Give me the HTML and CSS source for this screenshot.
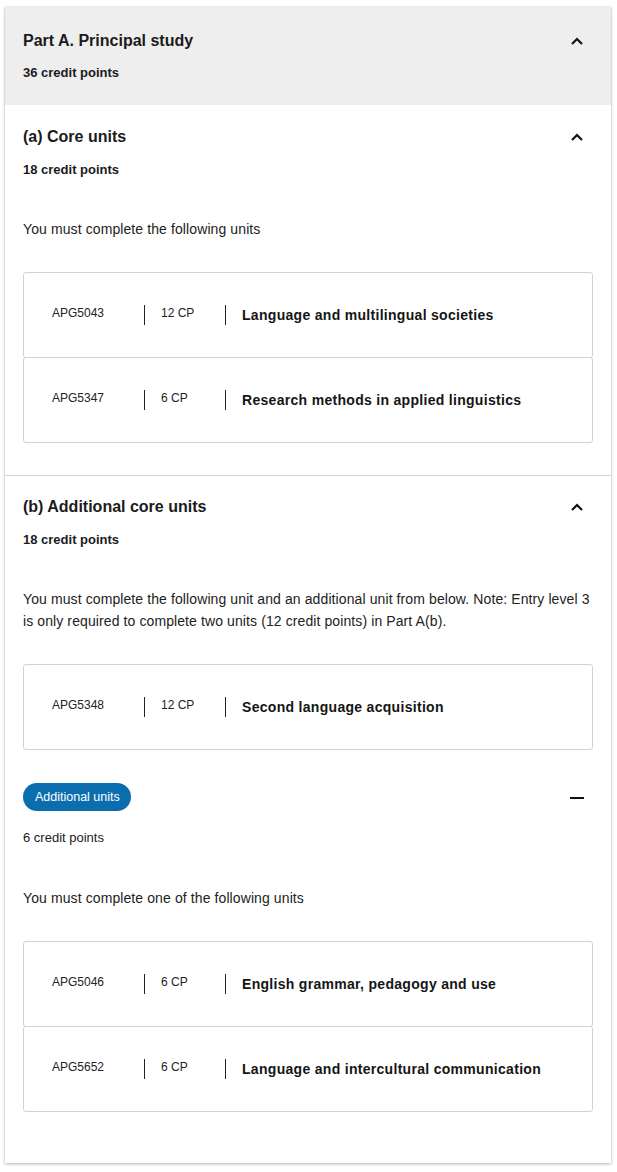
FILE: index.html
```html
<!DOCTYPE html>
<html lang="en">
<head>
<meta charset="utf-8">
<title>Part A. Principal study</title>
<link rel="stylesheet" href="styles.css">
</head>
<body>
<div class="page">
  <div class="card">
    <div class="part-head">
      <div class="head-row">
        <h2 class="part-title">Part A. Principal study</h2>
        <svg class="chev" width="14" height="10" viewBox="0 0 14 10"><path d="M2 8 L7 3 L12 8" fill="none" stroke="#111" stroke-width="2.2"/></svg>
      </div>
      <div class="cp-bold">36 credit points</div>
    </div>

    <section class="sect sect-a">
      <div class="head-row">
        <h3 class="sect-title">(a) Core units</h3>
        <svg class="chev" width="14" height="10" viewBox="0 0 14 10"><path d="M2 8 L7 3 L12 8" fill="none" stroke="#111" stroke-width="2.2"/></svg>
      </div>
      <div class="cp-bold">18 credit points</div>
      <p class="desc">You must complete the following units</p>
      <div class="units">
        <div class="unit"><span class="code">APG5043</span><span class="cp">12 CP</span><span class="name">Language and multilingual societies</span></div>
        <div class="unit"><span class="code">APG5347</span><span class="cp">6 CP</span><span class="name">Research methods in applied linguistics</span></div>
      </div>
    </section>

    <section class="sect sect-b">
      <div class="head-row">
        <h3 class="sect-title">(b) Additional core units</h3>
        <svg class="chev" width="14" height="10" viewBox="0 0 14 10"><path d="M2 8 L7 3 L12 8" fill="none" stroke="#111" stroke-width="2.2"/></svg>
      </div>
      <div class="cp-bold">18 credit points</div>
      <p class="desc">You must complete the following unit and an additional unit from below. Note: Entry level 3 is only required to complete two units (12 credit points) in Part A(b).</p>
      <div class="units">
        <div class="unit"><span class="code">APG5348</span><span class="cp">12 CP</span><span class="name">Second language acquisition</span></div>
      </div>

      <div class="sub">
        <div class="head-row">
          <span class="badge">Additional units</span>
          <span class="minus"></span>
        </div>
        <div class="cp-normal">6 credit points</div>
        <p class="desc desc-sub">You must complete one of the following units</p>
        <div class="units">
          <div class="unit"><span class="code">APG5046</span><span class="cp">6 CP</span><span class="name">English grammar, pedagogy and use</span></div>
          <div class="unit"><span class="code">APG5652</span><span class="cp">6 CP</span><span class="name">Language and intercultural communication</span></div>
        </div>
      </div>
    </section>
  </div>
</div>
</body>
</html>
```

FILE: styles.css
```css
* { box-sizing: border-box; }
body {
  margin: 0;
  background: #fff;
  font-family: "Liberation Sans", Arial, sans-serif;
  color: #1b1b1b;
}
.page {
  padding: 7px 6px 9px 5px;
}
.card {
  background: #fff;
  box-shadow: 0 1px 3px rgba(0,0,0,0.28), 0 0 1px rgba(0,0,0,0.2);
  padding-bottom: 51px;
}
.part-head {
  background: #eeeeee;
  padding: 24px 18px 23px 18px;
}
.head-row {
  display: flex;
  align-items: center;
  justify-content: space-between;
  padding-right: 9px;
}
.part-title, .sect-title {
  margin: 0;
  font-size: 16px;
  line-height: 20px;
  font-weight: bold;
}
.chev { display: block; }
.cp-bold {
  margin-top: 13px;
  font-size: 13px;
  line-height: 18px;
  font-weight: bold;
}
.sect {
  padding: 22px 18px 0 18px;
}
.sect-a {
  padding-top: 22px;
  padding-bottom: 32px;
  border-bottom: 1px solid #d4d4d4;
}
.sect-b { padding-top: 21px; }
.sect .cp-bold { margin-top: 14px; }
.desc {
  margin: 39px 0 0 0;
  font-size: 14px;
  line-height: 22px;
  letter-spacing: 0.1px;
  color: #222;
}
.desc-sub { margin-top: 40px; }
.units {
  margin-top: 32px;
  display: flex;
  flex-direction: column;
}
.unit {
  display: flex;
  align-items: center;
  height: 86px;
  border: 1px solid #d2d2d2;
  border-radius: 3px;
  padding-left: 28px;
}
.unit + .unit { margin-top: -1px; }
.code, .cp {
  font-size: 12px;
  height: 20px;
  line-height: 16px;
  color: #222;
}
.code { width: 92px; }
.cp {
  width: 81px;
  border-left: 1px solid #222;
  padding-left: 16px;
}
.name {
  border-left: 1px solid #222;
  padding-left: 16px;
  height: 20px;
  font-size: 14px;
  line-height: 21px;
  font-weight: bold;
  letter-spacing: 0.3px;
  color: #151515;
}
.sub { margin-top: 33px; }
.badge {
  display: inline-block;
  background: #0a6eae;
  color: #fff;
  font-size: 12.5px;
  line-height: 28px;
  height: 28px;
  padding: 0 11px 0 12px;
  border-radius: 14px;
}
.minus {
  display: block;
  width: 14px;
  height: 2px;
  background: #111;
  margin-top: 2px;
}
.cp-normal {
  margin-top: 18px;
  font-size: 13px;
  line-height: 18px;
}
```
